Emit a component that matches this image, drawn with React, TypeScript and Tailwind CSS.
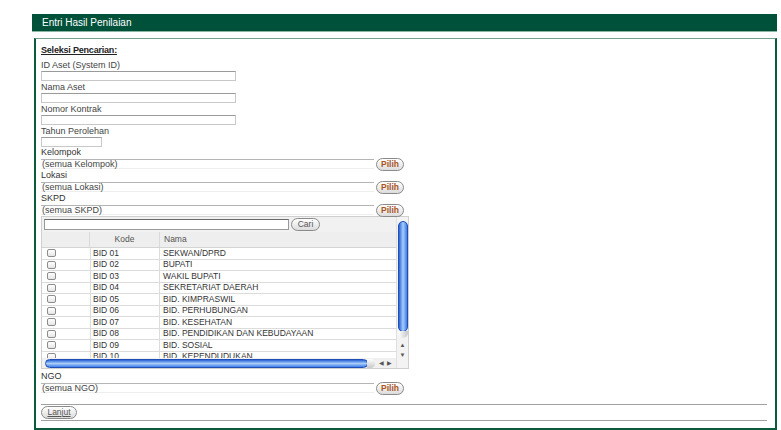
import React from 'react';

const ROWS: [string, string][] = [
  ['BID 01', 'SEKWAN/DPRD'],
  ['BID 02', 'BUPATI'],
  ['BID 03', 'WAKIL BUPATI'],
  ['BID 04', 'SEKRETARIAT DAERAH'],
  ['BID 05', 'BID. KIMPRASWIL'],
  ['BID 06', 'BID. PERHUBUNGAN'],
  ['BID 07', 'BID. KESEHATAN'],
  ['BID 08', 'BID. PENDIDIKAN DAN KEBUDAYAAN'],
  ['BID 09', 'BID. SOSIAL'],
  ['BID 10', 'BID. KEPENDUDUKAN'],
];

function Btn({ label, w, color = 'text-[#555]', underline = false }: { label: string; w: string; color?: string; underline?: boolean }) {
  return (
    <span
      className={`${w} h-[13px] shrink-0 rounded-full border border-[#8a8a8a] bg-gradient-to-b from-white to-[#dcdcdc] flex items-center justify-center text-[8.5px] leading-none ${color} ${underline ? 'underline' : ''}`}
    >
      {label}
    </span>
  );
}

function Field({ label, w }: { label: string; w: string }) {
  return (
    <div className="flex flex-col">
      <div className="h-[12px] leading-[13px] text-[9px] text-[#444]">{label}</div>
      <div className={`${w} h-[10px] border border-[#c8c8c8] border-t-[#9a9a9a] bg-white`} />
    </div>
  );
}

function Picker({ label, value }: { label: string; value: string }) {
  return (
    <div className="flex flex-col">
      <div className="h-[11px] leading-[11px] text-[9px] text-[#333]">{label}</div>
      <div className="flex items-center gap-[2px] h-[12px]">
        <div className="w-[333px] h-[10px] border-t border-[#b5b5b5] border-b border-b-[#eee] leading-[9px] text-[9px] text-[#444] pl-[1px]">
          {value}
        </div>
        <Btn label="Pilih" w="w-[28px]" color="text-[#a8561f] font-semibold" />
      </div>
    </div>
  );
}

function Check() {
  return <span className="block w-[9px] h-[8px] rounded-[2px] border border-[#8c8c8c] bg-gradient-to-b from-white to-[#e6e6e6]" />;
}

export default function App() {
  return (
    <div className="w-[781px] h-[430px] bg-white overflow-hidden font-['Liberation_Sans',Arial,sans-serif]">
      <div className="pt-[14px] pl-[32px] pr-[4px]">
        <div className="h-[18px] bg-[#00513a] border-b border-[#8db5a3] flex items-center pl-[10px] text-[10px] text-white">
          Entri Hasil Penilaian
        </div>
        <div className="mt-[6px] ml-[2px] h-[392px] border-x-2 border-b-2 border-t border-[#0c5a3c] border-t-[#6fa38c] pl-[5px] pr-[8px] pt-[6px]">
          <div className="h-[11px] leading-[11px] text-[9px] text-[#222] underline font-semibold tracking-[-0.2px]">Seleksi Pencarian:</div>
          <div className="flex flex-col mt-[3px]">
            <Field label="ID Aset (System ID)" w="w-[195px]" />
            <Field label="Nama Aset" w="w-[195px]" />
            <Field label="Nomor Kontrak" w="w-[195px]" />
            <Field label="Tahun Perolehan" w="w-[61px]" />
          </div>
          <div className="flex flex-col">
            <Picker label="Kelompok" value="(semua Kelompok)" />
            <Picker label="Lokasi" value="(semua Lokasi)" />
            <Picker label="SKPD" value="(semua SKPD)" />
          </div>

          {/* list box */}
          <div className="w-[368px] h-[153px] border border-[#cfcfcf] flex overflow-hidden">
            <div className="flex-1 flex flex-col min-w-0">
              <div className="h-[15px] bg-[#f1f1f1] flex items-center pl-[2px] gap-[2px]">
                <div className="w-[245px] h-[11px] border border-[#9a9a9a] border-t-[#6a6a6a] bg-white" />
                <Btn label="Cari" w="w-[29px]" color="text-[#555]" />
              </div>
              <div className="h-[16px] bg-[#eeeeee] flex text-[8.5px] text-[#555] border-b border-[#d4d4d4]">
                <div className="w-[48px] border-r border-[#dadada]" />
                <div className="w-[70px] border-r border-[#dadada] flex items-center justify-center">Kode</div>
                <div className="flex-1 flex items-center pl-[4px]">Nama</div>
              </div>
              <div className="flex-1 overflow-hidden">
                {ROWS.map(([k, n]) => (
                  <div key={k} className="h-[11.5px] flex items-center text-[8.5px] text-[#333] border-b border-[#dcdcdc]">
                    <div className="w-[48px] pl-[5px] flex items-center"><Check /></div>
                    <div className="w-[70px] h-full border-x border-[#dcdcdc] pl-[2px] flex items-center">{k}</div>
                    <div className="flex-1 pl-[3px] flex items-center whitespace-nowrap">{n}</div>
                  </div>
                ))}
              </div>
              <div className="h-[10px] shrink-0 bg-[#f0f0f0] flex items-center pl-[3px] pr-[2px]">
                <div className="w-[323px] h-[9px] rounded-full bg-gradient-to-b from-[#2a5fd6] via-[#a8cdf8] to-[#3f7be6] border border-[#1e4fb8]" />
                <div className="w-[8px] h-[9px] rounded-r-full bg-gradient-to-b from-white to-[#c8c8c8] -ml-[1px]" />
                <span className="ml-[4px] text-[6px] text-[#555]">◀</span>
                <span className="ml-[3px] text-[6px] text-[#555]">▶</span>
              </div>
            </div>
            <div className="w-[12px] shrink-0 bg-[#f3f3f3] border-l border-[#e0e0e0] flex flex-col items-center pt-[4px]">
              <div className="w-[10px] h-[111px] rounded-full bg-gradient-to-r from-[#2a5fd6] via-[#a8cdf8] to-[#3f7be6] border border-[#1e4fb8]" />
              <div className="w-[10px] h-[7px] rounded-b-full bg-gradient-to-r from-white to-[#c8c8c8] -mt-[1px]" />
              <span className="mt-[2px] text-[6px] leading-[10px] text-[#555]">▲</span>
              <span className="text-[6px] leading-[10px] text-[#555]">▼</span>
            </div>
          </div>

          <div className="mt-[2px]">
            <Picker label="NGO" value="(semua NGO)" />
          </div>
          <div className="mt-[10px] border-t border-[#a0a0a0] pt-[1px] pb-[1px] w-[726px]">
            <Btn label="Lanjut" w="w-[36px]" color="text-[#555]" underline />
          </div>
          <div className="border-t border-[#a0a0a0] w-[726px]" />
        </div>
      </div>
    </div>
  );
}
